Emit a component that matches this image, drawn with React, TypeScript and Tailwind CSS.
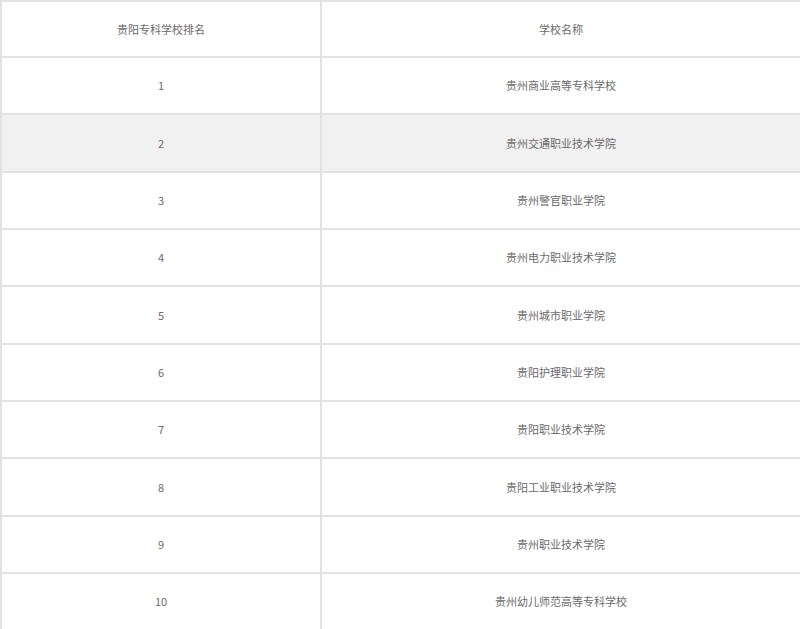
import React from "react";

const rows = [
  ["1", "贵州商业高等专科学校"],
  ["2", "贵州交通职业技术学院"],
  ["3", "贵州警官职业学院"],
  ["4", "贵州电力职业技术学院"],
  ["5", "贵州城市职业学院"],
  ["6", "贵阳护理职业学院"],
  ["7", "贵阳职业技术学院"],
  ["8", "贵阳工业职业技术学院"],
  ["9", "贵州职业技术学院"],
  ["10", "贵州幼儿师范高等专科学校"],
];

export default function App() {
  return (
    <div
      className="w-[800px] h-[629px] overflow-hidden bg-white text-[11px] text-[#6a6a6a]"
      style={{ fontFamily: '"Noto Sans CJK SC", "Noto Sans", sans-serif' }}
    >
      <div className="border-t-2 border-l-2 border-[#e2e2e2]">
        <div className="grid grid-cols-[320px_1fr] h-[56px] border-b-2 border-[#e2e2e2]">
          <div className="flex items-center justify-center border-r-2 border-[#e2e2e2]">贵阳专科学校排名</div>
          <div className="flex items-center justify-center">学校名称</div>
        </div>
        {rows.map(([n, name], i) => (
          <div
            key={n}
            className={`grid grid-cols-[320px_1fr] h-[57.33px] border-b-2 border-[#e2e2e2] ${i === 1 ? "bg-[#f1f1f1]" : "bg-white"}`}
          >
            <div className="flex items-center justify-center border-r-2 border-[#e2e2e2]">{n}</div>
            <div className="flex items-center justify-center">{name}</div>
          </div>
        ))}
      </div>
    </div>
  );
}
